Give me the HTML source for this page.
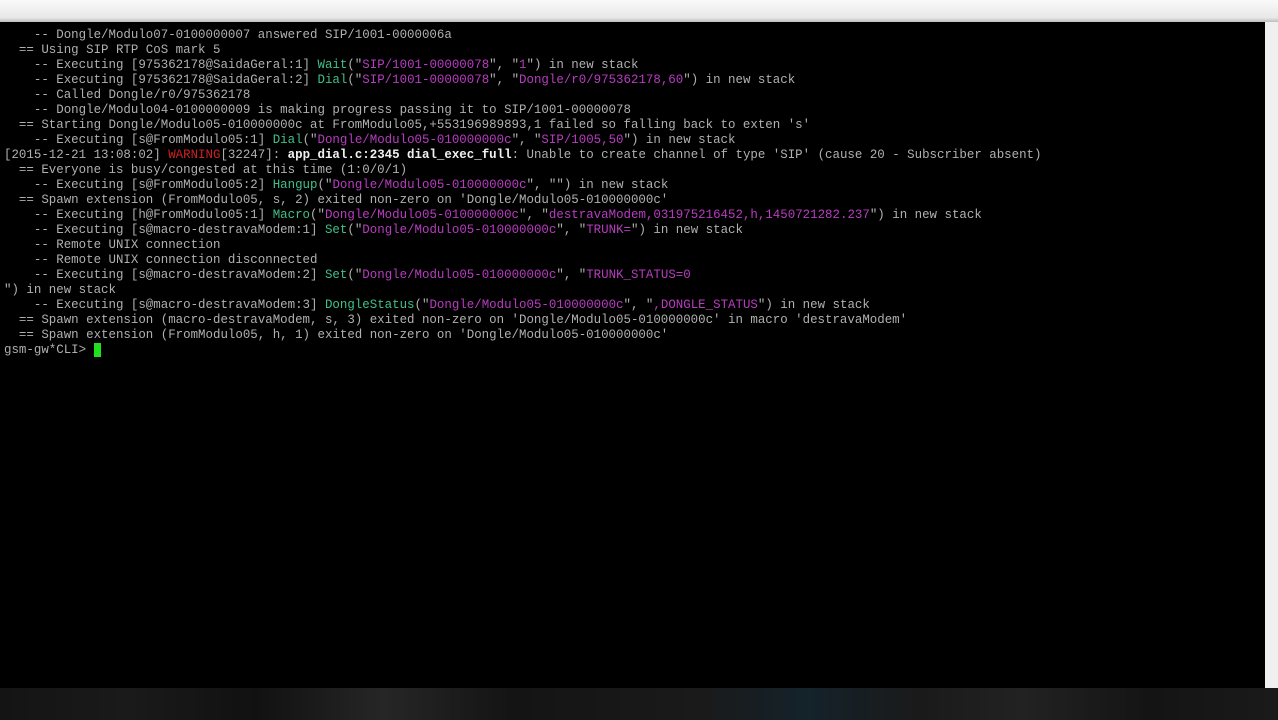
<!DOCTYPE html><html><head><style>
body{margin:0;width:1278px;height:720px;background:#000;overflow:hidden;position:relative}
.top{position:absolute;left:0;top:0;width:1278px;height:22px;background:linear-gradient(#fafafa,#e8e8e8 80%,#bdbdbd)}
.sb{position:absolute;left:1265px;top:22px;width:13px;height:666px;background:#f0f0f0}
.tb{position:absolute;left:0;top:688px;width:1278px;height:32px;background:linear-gradient(90deg,#141414,#1a1a1a 10%,#111 20%,#262626 30%,#141414 40%,#1a1a1a 55%,#14222a 63%,#1a1a1a 72%,#222 80%,#141414 90%,#1a1a1a)}
pre{position:absolute;left:4px;top:28px;margin:0;font:12.45px/15px "Liberation Mono",monospace;color:#b0b0b0}
.g{color:#3fc08a}.m{color:#b83cc0}.r{color:#d02020}.b{color:#f0f0f0;font-weight:bold}
.cur{background:#20e020;color:#20e020}
</style></head><body>
<div class="top"></div><div class="sb"></div><div class="tb"></div>
<pre>    -- Dongle/Modulo07-0100000007 answered SIP/1001-0000006a
  == Using SIP RTP CoS mark 5
    -- Executing [975362178@SaidaGeral:1] <span class="g">Wait</span>("<span class="m">SIP/1001-00000078</span>", "<span class="m">1</span>") in new stack
    -- Executing [975362178@SaidaGeral:2] <span class="g">Dial</span>("<span class="m">SIP/1001-00000078</span>", "<span class="m">Dongle/r0/975362178,60</span>") in new stack
    -- Called Dongle/r0/975362178
    -- Dongle/Modulo04-0100000009 is making progress passing it to SIP/1001-00000078
  == Starting Dongle/Modulo05-010000000c at FromModulo05,+553196989893,1 failed so falling back to exten 's'
    -- Executing [s@FromModulo05:1] <span class="g">Dial</span>("<span class="m">Dongle/Modulo05-010000000c</span>", "<span class="m">SIP/1005,50</span>") in new stack
[2015-12-21 13:08:02] <span class="r">WARNING</span>[32247]: <span class="b">app_dial.c:2345 dial_exec_full</span>: Unable to create channel of type 'SIP' (cause 20 - Subscriber absent)
  == Everyone is busy/congested at this time (1:0/0/1)
    -- Executing [s@FromModulo05:2] <span class="g">Hangup</span>("<span class="m">Dongle/Modulo05-010000000c</span>", "") in new stack
  == Spawn extension (FromModulo05, s, 2) exited non-zero on 'Dongle/Modulo05-010000000c'
    -- Executing [h@FromModulo05:1] <span class="g">Macro</span>("<span class="m">Dongle/Modulo05-010000000c</span>", "<span class="m">destravaModem,031975216452,h,1450721282.237</span>") in new stack
    -- Executing [s@macro-destravaModem:1] <span class="g">Set</span>("<span class="m">Dongle/Modulo05-010000000c</span>", "<span class="m">TRUNK=</span>") in new stack
    -- Remote UNIX connection
    -- Remote UNIX connection disconnected
    -- Executing [s@macro-destravaModem:2] <span class="g">Set</span>("<span class="m">Dongle/Modulo05-010000000c</span>", "<span class="m">TRUNK_STATUS=0</span>
") in new stack
    -- Executing [s@macro-destravaModem:3] <span class="g">DongleStatus</span>("<span class="m">Dongle/Modulo05-010000000c</span>", "<span class="m">,DONGLE_STATUS</span>") in new stack
  == Spawn extension (macro-destravaModem, s, 3) exited non-zero on 'Dongle/Modulo05-010000000c' in macro 'destravaModem'
  == Spawn extension (FromModulo05, h, 1) exited non-zero on 'Dongle/Modulo05-010000000c'
gsm-gw*CLI&gt; <span class="cur">_</span></pre>
</body></html>
